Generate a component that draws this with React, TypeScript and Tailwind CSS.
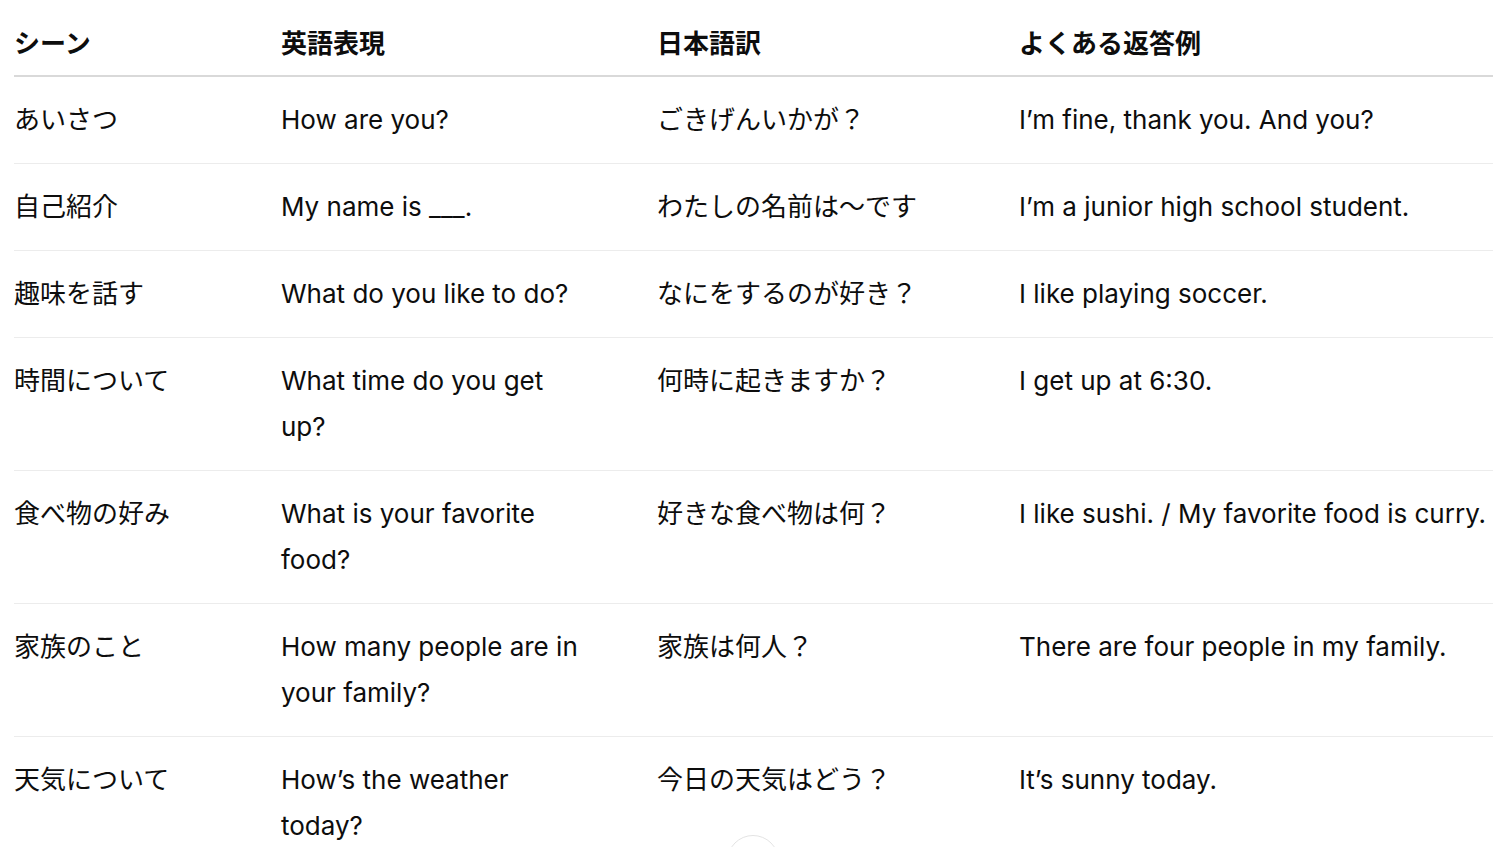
import React from 'react';

const rows = [
  { scene: 'あいさつ', en: 'How are you?', ja: 'ごきげんいかが？', reply: 'I’m fine, thank you. And you?' },
  { scene: '自己紹介', en: 'My name is ___.', ja: 'わたしの名前は〜です', reply: 'I’m a junior high school student.' },
  { scene: '趣味を話す', en: 'What do you like to do?', ja: 'なにをするのが好き？', reply: 'I like playing soccer.' },
  { scene: '時間について', en: 'What time do you get up?', ja: '何時に起きますか？', reply: 'I get up at 6:30.' },
  { scene: '食べ物の好み', en: 'What is your favorite food?', ja: '好きな食べ物は何？', reply: 'I like sushi. / My favorite food is curry.' },
  { scene: '家族のこと', en: 'How many people are in your family?', ja: '家族は何人？', reply: 'There are four people in my family.' },
  { scene: '天気について', en: 'How’s the weather today?', ja: '今日の天気はどう？', reply: 'It’s sunny today.' },
];

function App() {
  return (
    <div
      className="min-h-screen bg-white text-[#0d0d0d] overflow-hidden"
      style={{ fontFamily: 'Inter, "Noto Sans CJK JP", sans-serif' }}
    >
      <div className="px-[14px]">
        <table className="w-[1479px] table-fixed border-collapse text-[26px] leading-[46px]">
          <colgroup>
            <col className="w-[267px]" />
            <col className="w-[376px]" />
            <col className="w-[362px]" />
            <col className="w-[474px]" />
          </colgroup>
          <thead>
            <tr className="border-b-2 border-[#d9d9d9]">
              <th className="text-left font-bold pt-[21px] pb-[8px] pr-4">シーン</th>
              <th className="text-left font-bold pt-[21px] pb-[8px] pr-[66px]">英語表現</th>
              <th className="text-left font-bold pt-[21px] pb-[8px] pr-4">日本語訳</th>
              <th className="text-left font-bold pt-[21px] pb-[8px]">よくある返答例</th>
            </tr>
          </thead>
          <tbody>
            {rows.map((r, i) => (
              <tr key={i} className="border-b border-[#ececec] align-top">
                <td className="py-5 pr-4">{r.scene}</td>
                <td className="py-5 pr-[66px]">{r.en}</td>
                <td className="py-5 pr-4">{r.ja}</td>
                <td className="py-5 whitespace-nowrap">{r.reply}</td>
              </tr>
            ))}
          </tbody>
        </table>
      </div>

      {/* scroll-down button peeking at the bottom */}
      <div className="fixed left-[727px] top-[835px] w-[52px] h-[52px] rounded-full bg-white border border-[#e3e3e3]" />
    </div>
  );
}

export default App;
